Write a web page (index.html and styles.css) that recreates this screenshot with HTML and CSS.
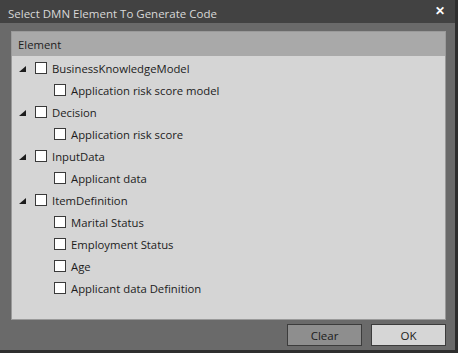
FILE: index.html
```html
<!DOCTYPE html>
<html lang="en">
<head>
    <meta charset="UTF-8">
    <title>Select DMN Element To Generate Code</title>
    <link rel="stylesheet" href="styles.css">
</head>
<body>
    <div class="dialog">
        <div class="titlebar">
            <span class="title">Select DMN Element To Generate Code</span>
            <span class="close">&#x2715;</span>
        </div>

        <div class="panel">
            <div class="panel-header">Element</div>
            <div class="tree">
                <div class="row parent"><span class="arrow"><svg width="7" height="6" viewBox="0 0 7 6"><polygon points="7,0 7,6 0,6" fill="#1c1c1c"/></svg></span><span class="box"></span><span class="label">BusinessKnowledgeModel</span></div>
                <div class="row child"><span class="box"></span><span class="label">Application risk score model</span></div>
                <div class="row parent"><span class="arrow"><svg width="7" height="6" viewBox="0 0 7 6"><polygon points="7,0 7,6 0,6" fill="#1c1c1c"/></svg></span><span class="box"></span><span class="label">Decision</span></div>
                <div class="row child"><span class="box"></span><span class="label">Application risk score</span></div>
                <div class="row parent"><span class="arrow"><svg width="7" height="6" viewBox="0 0 7 6"><polygon points="7,0 7,6 0,6" fill="#1c1c1c"/></svg></span><span class="box"></span><span class="label">InputData</span></div>
                <div class="row child"><span class="box"></span><span class="label">Applicant data</span></div>
                <div class="row parent"><span class="arrow"><svg width="7" height="6" viewBox="0 0 7 6"><polygon points="7,0 7,6 0,6" fill="#1c1c1c"/></svg></span><span class="box"></span><span class="label">ItemDefinition</span></div>
                <div class="row child"><span class="box"></span><span class="label">Marital Status</span></div>
                <div class="row child"><span class="box"></span><span class="label">Employment Status</span></div>
                <div class="row child"><span class="box"></span><span class="label">Age</span></div>
                <div class="row child"><span class="box"></span><span class="label">Applicant data Definition</span></div>
            </div>
        </div>

        <div class="footer">
            <button class="btn btn-clear">Clear</button>
            <button class="btn btn-ok">OK</button>
        </div>
    </div>
</body>
</html>
```

FILE: styles.css
```css
body {
    margin: 0;
    background-color: #2e2e2e;
    font-family: "Open Sans", "Noto Sans", sans-serif;
    font-size: 11.3px;
}
.dialog {
    width: 455px;
    height: 350px;
    background-color: #6a6a6a;
    display: flex;
    flex-direction: column;
}
.titlebar {
    height: 23px;
    background-color: #424242;
    display: flex;
    align-items: center;
    justify-content: space-between;
    padding: 0 10px 0 8px;
    color: #d8d8d8;
}
.title {
    font-size: 11.5px;
    padding-top: 4px;
}
.close {
    color: #ffffff;
    font-size: 12px;
    font-weight: bold;
    margin-top: -3px;
}
.panel {
    margin: 8px 9px 0 11px;
    background-color: #d5d5d5;
    border: 1px solid #9a9a9a;
    box-sizing: border-box;
    height: 289px;
}
.panel-header {
    height: 24px;
    background-color: #a9a9a9;
    color: #1e1e1e;
    padding-left: 6px;
    display: flex;
    align-items: center;
}
.tree {
    padding-top: 1px;
}
.row {
    height: 22px;
    display: flex;
    align-items: center;
    color: #1c1c1c;
}
.parent {
    padding-left: 7px;
}
.child {
    padding-left: 42px;
}
.arrow {
    width: 7px;
    height: 6px;
    display: flex;
    margin-right: 9px;
    margin-top: 2px;
}
.box {
    width: 12px;
    height: 12px;
    background-color: #ffffff;
    border: 1px solid #3a3a3a;
    box-sizing: border-box;
    margin-right: 5px;
}
.footer {
    display: flex;
    justify-content: flex-end;
    gap: 9px;
    padding: 4px 9px 0 0;
}
.btn {
    width: 75px;
    height: 22px;
    border: 1px solid #3c3c3c;
    font-family: inherit;
    font-size: 11.5px;
    color: #1c1c1c;
    padding: 0;
}
.btn-clear {
    background-color: #8e8e8e;
}
.btn-ok {
    background-color: #d6d6d6;
}
```
